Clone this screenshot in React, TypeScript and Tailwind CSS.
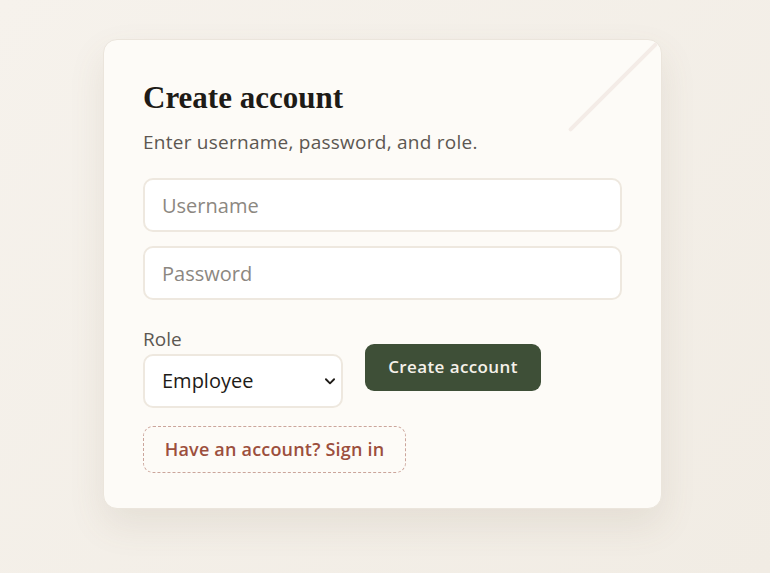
import React from "react";

const sans = "font-['Open_Sans','Noto_Sans',sans-serif]";

export default function App() {
  const [role, setRole] = React.useState("Employee");

  return (
    <div className={`min-h-screen w-full bg-[linear-gradient(135deg,#f6f2ec_0%,#f1ece4_100%)] pt-[39px] ${sans}`}>
      <div className="relative ml-[103px] w-[559px] overflow-hidden rounded-[14px] border border-[#ebe5dc] bg-[#fdfbf7] px-[39px] pt-[39px] pb-[35px] shadow-[0_16px_36px_rgba(120,100,70,0.11)]">
        {/* decorative slash in the corner */}
        <div className="pointer-events-none absolute left-[447px] top-[45px] h-[4px] w-[124px] rotate-[-45deg] rounded-full bg-[#f4ece7]" />

        <h1 className="font-['Liberation_Serif','DejaVu_Serif',serif] text-[31px] font-bold leading-[38px] text-[#1e1b17]">
          Create account
        </h1>
        <p className="mt-[12px] text-[19px] leading-[26px] tracking-[0.25px] text-[#5c5751]">
          Enter username, password, and role.
        </p>

        <form className="mt-[23px] flex flex-col gap-[14px]" onSubmit={(e) => e.preventDefault()}>
          <input
            type="text"
            placeholder="Username"
            className="h-[54px] w-full rounded-[10px] border-2 border-[#eee8df] bg-white px-[17px] text-[20px] text-[#1e1b17] outline-none placeholder:text-[#8c8781]"
          />
          <input
            type="password"
            placeholder="Password"
            className="h-[54px] w-full rounded-[10px] border-2 border-[#eee8df] bg-white px-[17px] text-[20px] text-[#1e1b17] outline-none placeholder:text-[#8c8781]"
          />

          <div className="mt-[12px] flex items-center gap-[22px]">
            <label className="flex flex-col gap-[2px]">
              <span className="text-[19px] leading-[26px] text-[#5c5751]">Role</span>
              <div className="relative w-[200px]">
                <select
                  value={role}
                  onChange={(e) => setRole(e.target.value)}
                  className="h-[54px] w-full appearance-none rounded-[10px] border-2 border-[#eee8df] bg-white pl-[17px] pr-[36px] text-[20px] text-[#1e1b17] outline-none"
                >
                  <option>Employee</option>
                  <option>Manager</option>
                  <option>Admin</option>
                </select>
                <svg
                  className="pointer-events-none absolute right-[6px] top-1/2 h-[14px] w-[14px] -translate-y-1/2"
                  viewBox="0 0 24 24"
                  fill="none"
                  stroke="#1e1b17"
                  strokeWidth="3.2"
                  strokeLinecap="round"
                  strokeLinejoin="round"
                >
                  <path d="M5 9l7 7 7-7" />
                </svg>
              </div>
            </label>
            <button
              type="submit"
              className="h-[47px] w-[176px] rounded-[9px] bg-[#3e4f37] text-[17px] font-semibold tracking-[0.4px] text-[#f5f1ea]"
            >
              Create account
            </button>
          </div>

          <button
            type="button"
            className="mt-[4px] h-[47px] w-[263px] rounded-[10px] border border-dashed border-[#cba59b] text-[18px] font-semibold tracking-[0.2px] text-[#9c4f3d]"
          >
            Have an account? Sign in
          </button>
        </form>
      </div>
    </div>
  );
}
